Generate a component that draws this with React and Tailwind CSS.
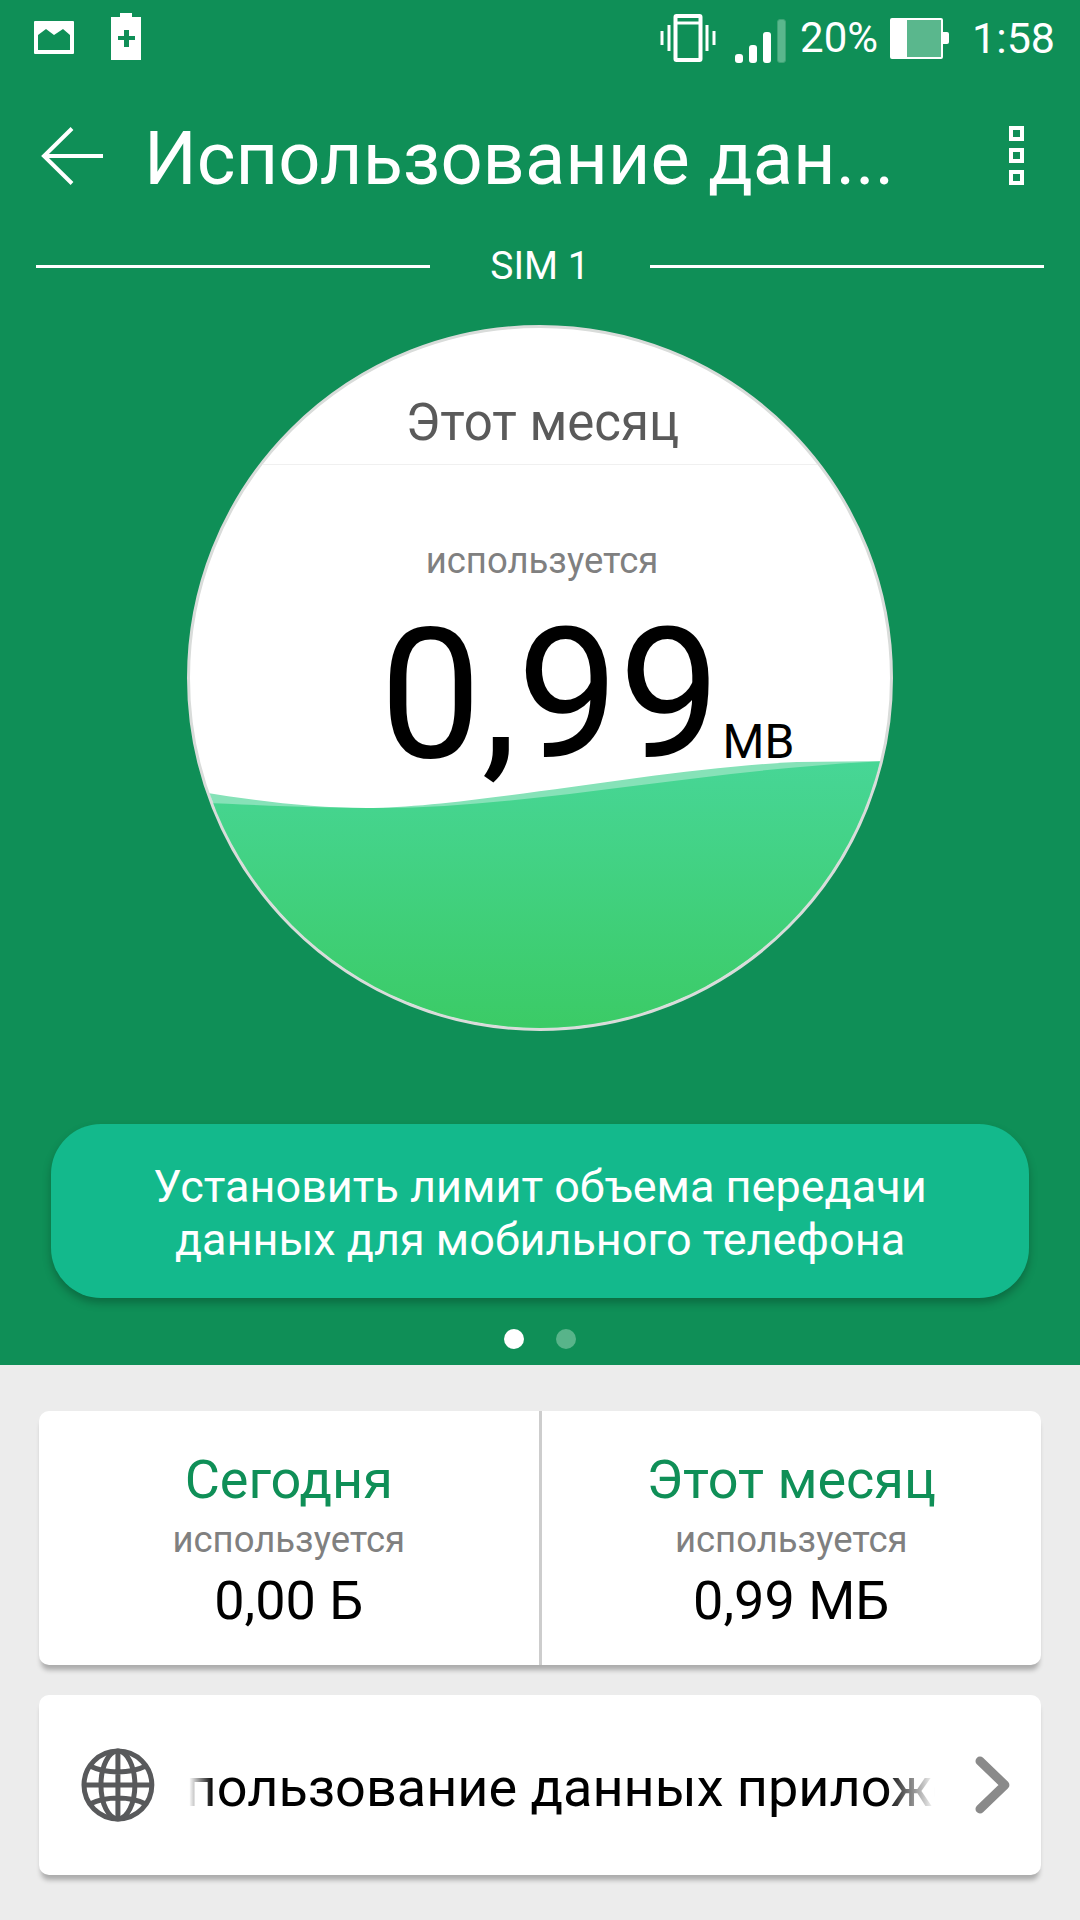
const FONT = "font-['Roboto','Noto_Sans',sans-serif]";

function StatusBar() {
  return (
    <div className="flex h-[70px] items-center pl-[34px] pr-[25px] text-white">
      <svg width="40" height="33" viewBox="0 0 40 33" className="mt-[4px]">
        <path fillRule="evenodd" fill="#fff" d="M1 0h38a1 1 0 0 1 1 1v31a1 1 0 0 1-1 1H1a1 1 0 0 1-1-1V1a1 1 0 0 1 1-1zM4 29h32V14l-7-6-9 6-8-6-8 6z" />
      </svg>
      <svg width="30" height="47" viewBox="0 0 30 47" className="ml-[37px] mt-[2px]">
        <path fill="#fff" d="M9 0h12v4h9v43H0V4h9z" />
        <path fill="#0f8f57" d="M13 17h5v6h6v4h-6v7h-5v-7H7v-4h6z" />
      </svg>
      <div className="flex-1" />
      <svg width="56" height="48" viewBox="0 0 56 48" className="mr-[19px] mt-[6px]" fill="none" stroke="#fff">
        <rect x="15.5" y="2" width="25" height="44" rx="1" strokeWidth="4" />
        <path d="M16 9h24" strokeWidth="3" />
        <path d="M2 17v14M9 11v26M47 11v26M54 17v14" strokeWidth="3" />
      </svg>
      <svg width="52" height="44" viewBox="0 0 52 44" className="mr-[13px] mt-[12px]">
        <rect x="0" y="35" width="8" height="9" rx="3" fill="#fff" />
        <rect x="14" y="26" width="8" height="18" rx="3" fill="#fff" />
        <rect x="28" y="13" width="8" height="31" rx="3" fill="#fff" />
        <rect x="42.5" y="0.5" width="8" height="43" rx="2.5" fill="#5ab78d" stroke="#3fa476" />
      </svg>
      <span className="mr-[12px] mt-[6px] text-[42px] leading-none">20%</span>
      <div className="mt-[6px] flex items-center">
        <div className="flex h-[41px] w-[53px] rounded-[2px] border-[2px] border-white bg-[#5ab78d]">
          <div className="h-full w-[15px] bg-white" />
        </div>
        <div className="h-[12px] w-[6px] rounded-r-[2px] bg-white" />
      </div>
      <span className="ml-[23px] mt-[6px] text-[43px] leading-none">1:58</span>
    </div>
  );
}

function Header() {
  return (
    <div className="flex h-[177px] items-center pl-[41px] pr-[56px]">
      <svg width="62" height="58" viewBox="0 0 62 58" fill="none" stroke="#fff" strokeWidth="4" className="mb-[5px]">
        <path d="M62 29H3M31 1.5 3 29l28 27.5" />
      </svg>
      <h1 className="ml-[41px] flex-1 whitespace-nowrap text-[74px] font-normal leading-none text-white">Использование дан...</h1>
      <div className="mb-[6px] flex flex-col gap-[7px]">
        <div className="h-[15px] w-[15px] border-[4px] border-white" />
        <div className="h-[15px] w-[15px] border-[4px] border-white" />
        <div className="h-[15px] w-[15px] border-[4px] border-white" />
      </div>
    </div>
  );
}

function Gauge() {
  return (
    <div className="relative mx-auto mt-[39px] h-[706px] w-[706px] overflow-hidden rounded-full border-[3px] border-[#d9dcda] bg-white">
      <svg width="700" height="700" viewBox="0 0 700 700" className="absolute left-0 top-0">
        <defs>
          <linearGradient id="fill" x1="0" y1="0" x2="0" y2="1">
            <stop offset="0" stopColor="#47d696" />
            <stop offset="1" stopColor="#3bcb66" />
          </linearGradient>
        </defs>
        <path fill="#86e2b8" d="M0 462C60 472 120 480 176 480C280 480 470 440 607 434L700 433V700H0Z" />
        <path fill="url(#fill)" d="M0 474C60 477 130 480 192 480C340 480 520 440 700 433V700H0Z" />
      </svg>
      <div className="relative flex flex-col items-center">
        <div className="flex h-[137px] w-full items-center justify-center border-b border-[#f0f0f0] pl-[5px] pt-[52px] text-[51px] leading-none text-[#5a5a5a]">
          Этот месяц
        </div>
        <div className="ml-[4px] mt-[78px] text-[36.5px] leading-none text-[#808080]">используется</div>
        <div className="ml-[94px] mt-[37px] flex items-end text-black">
          <span className="text-[181px] leading-[156px]">0,99</span>
          <span className="mb-[7px] ml-[2px] text-[48px] leading-[48px]">MB</span>
        </div>
      </div>
    </div>
  );
}

function StatCell({ title, amount }) {
  return (
    <div className="flex flex-1 flex-col items-center pt-[42px]">
      <div className="text-[54px] leading-none text-[#0f8f57]">{title}</div>
      <div className="mt-[15px] text-[36.5px] leading-none text-[#808080]">используется</div>
      <div className="mt-[15px] text-[54px] leading-none text-black">{amount}</div>
    </div>
  );
}

function GlobeIcon() {
  return (
    <svg width="74" height="74" viewBox="0 0 74 74" fill="none" stroke="#58595b" strokeWidth="5">
      <circle cx="37" cy="37" r="34" />
      <ellipse cx="37" cy="37" rx="17" ry="34" />
      <path d="M37 3v68M3 37h68M9 18c16 8 40 8 56 0M9 56c16-8 40-8 56 0" />
    </svg>
  );
}

export default function App() {
  return (
    <div className={`flex h-[1920px] w-[1080px] flex-col overflow-hidden bg-[#ececec] ${FONT}`}>
      <div className="h-[1365px] bg-[#0f8f57]">
        <StatusBar />
        <Header />
        <div className="flex items-center px-[36px] text-white">
          <div className="h-[3px] w-[394px] bg-white" />
          <div className="flex-1 text-center text-[39px] leading-none">SIM 1</div>
          <div className="h-[3px] w-[394px] bg-white" />
        </div>
        <Gauge />
        <div className="mx-[51px] mt-[93px] flex h-[174px] flex-col items-center justify-center rounded-[50px] bg-[#13b98c] pt-[4px] text-[45px] leading-[53px] text-white shadow-[0_5px_8px_rgba(0,0,0,0.25)]">
          <div>Установить лимит объема передачи</div>
          <div>данных для мобильного телефона</div>
        </div>
        <div className="mt-[31px] flex justify-center gap-[32px]">
          <div className="h-[20px] w-[20px] rounded-full bg-white" />
          <div className="h-[20px] w-[20px] rounded-full bg-[#58b48a]" />
        </div>
      </div>
      <div className="px-[39px] pt-[46px]">
        <div className="flex h-[254px] rounded-[10px] bg-white shadow-[0_7px_5px_-2px_rgba(0,0,0,0.28)]">
          <StatCell title="Сегодня" amount="0,00 Б" />
          <div className="w-[3px] bg-[#cdcdcd]" />
          <StatCell title="Этот месяц" amount="0,99 МБ" />
        </div>
        <div className="mt-[30px] flex h-[180px] items-center rounded-[10px] bg-white pl-[42px] pr-[30px] shadow-[0_7px_5px_-2px_rgba(0,0,0,0.28)]">
          <GlobeIcon />
          <div className="relative ml-[34px] mt-[6px] w-[748px] overflow-hidden">
            <div className="-ml-[70px] whitespace-nowrap text-[54px] leading-[66px] text-black">Использование данных приложений</div>
            <div className="absolute inset-y-0 left-0 w-[24px] bg-gradient-to-r from-white to-transparent" />
            <div className="absolute inset-y-0 right-0 w-[50px] bg-gradient-to-l from-white to-transparent" />
          </div>
          <svg width="36" height="58" viewBox="0 0 36 58" fill="none" stroke="#8a8a8a" strokeWidth="9" strokeLinecap="round" strokeLinejoin="round" className="ml-[40px]">
            <path d="M5 5l25 24L5 53" />
          </svg>
        </div>
      </div>
    </div>
  );
}
